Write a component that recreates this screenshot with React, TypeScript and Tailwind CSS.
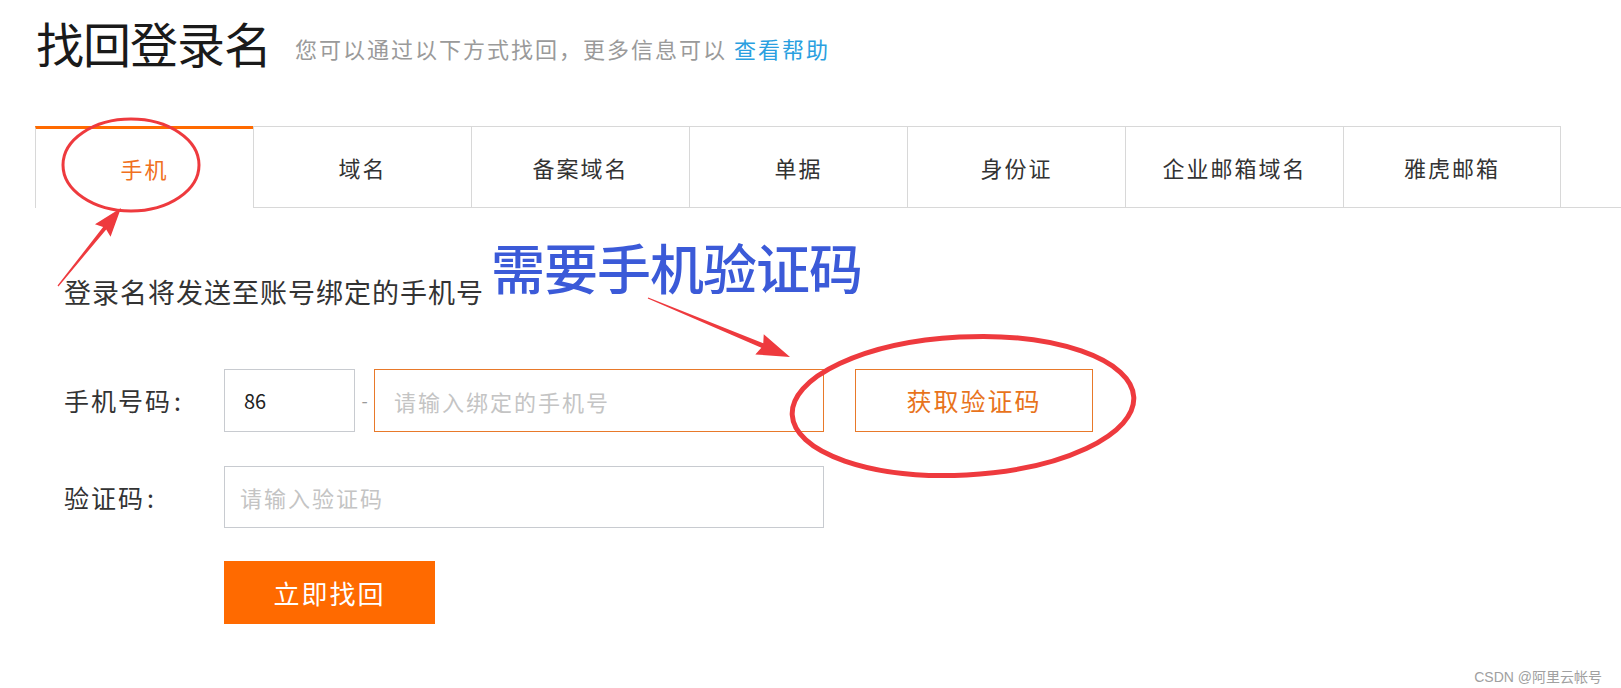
import React from 'react';

const tabs = ['手机', '域名', '备案域名', '单据', '身份证', '企业邮箱域名', '雅虎邮箱'];

// tapered red arrow like the screenshot tool draws
function arrow(x1: number, y1: number, x2: number, y2: number, headLen = 26, headW = 10, shaftW = 4) {
  const dx = x2 - x1;
  const dy = y2 - y1;
  const len = Math.sqrt(dx * dx + dy * dy);
  const ux = dx / len;
  const uy = dy / len;
  const nx = -uy;
  const ny = ux;
  const bx = x2 - ux * headLen;
  const by = y2 - uy * headLen;
  const pts = [
    [x1 + nx * 0.6, y1 + ny * 0.6],
    [bx + nx * (shaftW / 2), by + ny * (shaftW / 2)],
    [bx - ux * 3 + nx * headW, by - uy * 3 + ny * headW],
    [x2, y2],
    [bx - ux * 3 - nx * headW, by - uy * 3 - ny * headW],
    [bx - nx * (shaftW / 2), by - ny * (shaftW / 2)],
    [x1 - nx * 0.6, y1 - ny * 0.6],
  ];
  return pts.map((p) => p.join(',')).join(' ');
}

function Annotations() {
  return (
    <svg
      className="pointer-events-none absolute left-0 top-0"
      width="1621"
      height="688"
      viewBox="0 0 1621 688"
    >
      <ellipse cx="131" cy="165" rx="68" ry="46" fill="none" stroke="#ee3a3e" strokeWidth="3" />
      <polygon points={arrow(58, 286, 121, 208)} fill="#ee3a3e" />
      <polygon points={arrow(648, 298, 790, 357, 30, 11, 5)} fill="#ee3a3e" />
      <ellipse
        cx="963"
        cy="406"
        rx="171"
        ry="69"
        fill="none"
        stroke="#ee3a3e"
        strokeWidth="5"
        transform="rotate(-3 963 406)"
      />
    </svg>
  );
}

export default function App() {
  return (
    <div className="relative h-[688px] w-full overflow-hidden bg-white font-['Noto_Sans_CJK_SC',sans-serif] text-[#333]">
      {/* heading */}
      <div className="flex items-end pl-[36px] pt-[18px]">
        <h1 className="text-[48px] leading-none tracking-[-1px] text-[#1a1a1a]">找回登录名</h1>
        <p className="mb-[7px] ml-[24px] text-[22px] leading-none tracking-[2px] text-[#9a9a9a]">
          您可以通过以下方式找回，更多信息可以
          <a className="ml-[7px] text-[#2a9fe0]">查看帮助</a>
        </p>
      </div>

      {/* tabs */}
      <div className="mt-[60px] flex h-[82px] pl-[35px]">
        {tabs.map((t, i) =>
          i === 0 ? (
            <div
              key={t}
              className="flex w-[218px] items-center justify-center border-l border-t-[3px] border-l-[#d8d8d8] border-t-[#ff6a00] text-[22px] tracking-[2px] text-[#f07020]"
            >
              {t}
            </div>
          ) : (
            <div
              key={t}
              className={`flex w-[218px] items-center justify-center border-b border-l border-t border-[#d8d8d8] text-[22px] tracking-[2px] text-[#333] ${
                i === tabs.length - 1 ? 'border-r' : ''
              }`}
            >
              {t}
            </div>
          )
        )}
        <div className="flex-1 border-b border-[#d8d8d8]" />
      </div>

      {/* hint */}
      <div className="mt-[32px] flex items-end pl-[64px]">
        <p className="text-[27px] leading-none tracking-[1px] text-[#333]">登录名将发送至账号绑定的手机号</p>
        <p className="mb-[11px] ml-[7px] text-[54px] font-medium leading-none tracking-[-1px] text-[#3b5ad8]">需要手机验证码</p>
      </div>

      {/* form */}
      <div className="mt-[64px] flex items-center pl-[64px]">
        <label className="w-[160px] text-[25px] leading-none tracking-[2px] text-[#333]">
          手机号码<span className="ml-[2px]">:</span>
        </label>
        <input
          readOnly
          value="86"
          className="h-[63px] w-[131px] border border-[#c8cbd0] pl-[19px] text-[20px] text-[#222] outline-none"
        />
        <span className="w-[19px] text-center text-[18px] text-[#999]">-</span>
        <input
          readOnly
          placeholder="请输入绑定的手机号"
          className="h-[63px] w-[450px] border border-[#e8792a] pl-[19px] text-[22px] tracking-[2px] outline-none placeholder:text-[#c4c4c4]"
        />
        <button className="ml-[31px] h-[63px] w-[238px] border border-[#e8792a] text-[25px] tracking-[2px] text-[#e8731c]">
          获取验证码
        </button>
      </div>

      <div className="mt-[34px] flex items-center pl-[64px]">
        <label className="w-[160px] text-[25px] leading-none tracking-[2px] text-[#333]">
          验证码<span className="ml-[2px]">:</span>
        </label>
        <input
          readOnly
          placeholder="请输入验证码"
          className="h-[62px] w-[600px] border border-[#c8cbd0] pl-[15px] text-[22px] tracking-[2px] outline-none placeholder:text-[#c4c4c4]"
        />
      </div>

      <div className="mt-[33px] pl-[224px]">
        <button className="h-[63px] w-[211px] bg-[#ff6a00] text-[26px] tracking-[2px] text-white">立即找回</button>
      </div>

      <Annotations />

      <span className="absolute bottom-[4px] right-[19px] font-['Liberation_Sans','Noto_Sans_CJK_SC',sans-serif] text-[14px] leading-none text-[#a0a0a0]">
        CSDN @阿里云帐号
      </span>
    </div>
  );
}
